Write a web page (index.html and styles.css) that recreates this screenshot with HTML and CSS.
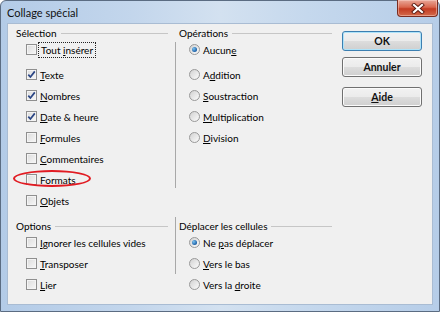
FILE: index.html
```html
<!DOCTYPE html>
<html>
<head>
  <title>Collage spécial</title>
  <link rel="stylesheet" href="styles.css">
</head>
<body>
  <div class="window">
    <div class="titlebar">
      <span class="title">Collage spécial</span>
      <div class="close">
        <svg width="14" height="11" viewBox="0 0 14 11">
          <path d="M3 2 L11 9 M11 2 L3 9" stroke="#5a1a10" stroke-width="4" stroke-linecap="square"/>
          <path d="M3 2 L11 9 M11 2 L3 9" stroke="#ffffff" stroke-width="2.2" stroke-linecap="square"/>
        </svg>
      </div>
    </div>

    <div class="client">
      <div class="groups">

        <!-- Sélection -->
        <div class="group">
          <div class="group-head"><span>Sélection</span></div>
          <div class="item first"><span class="box"></span><span class="focus">Tout <u>i</u>nsérer</span></div>
          <div class="item"><span class="box"><svg width="9" height="9" viewBox="0 0 9 9"><path d="M1.3 4.6 L3.4 7 L7.8 1.4" fill="none" stroke="#2a4584" stroke-width="1.7"/></svg></span><span><u>T</u>exte</span></div>
          <div class="item"><span class="box"><svg width="9" height="9" viewBox="0 0 9 9"><path d="M1.3 4.6 L3.4 7 L7.8 1.4" fill="none" stroke="#2a4584" stroke-width="1.7"/></svg></span><span><u>N</u>ombres</span></div>
          <div class="item"><span class="box"><svg width="9" height="9" viewBox="0 0 9 9"><path d="M1.3 4.6 L3.4 7 L7.8 1.4" fill="none" stroke="#2a4584" stroke-width="1.7"/></svg></span><span><u>D</u>ate &amp; heure</span></div>
          <div class="item"><span class="box"></span><span><u>F</u>ormules</span></div>
          <div class="item"><span class="box"></span><span><u>C</u>ommentaires</span></div>
          <div class="item marked"><span class="box"></span><span>For<u>m</u>ats</span><span class="ring"></span></div>
          <div class="item"><span class="box"></span><span><u>O</u>bjets</span></div>
        </div>

        <div class="vsep top"></div>

        <!-- Opérations -->
        <div class="group">
          <div class="group-head"><span>Opérations</span></div>
          <div class="item first"><span class="radio on"></span><span>Aucun<u>e</u></span></div>
          <div class="item"><span class="radio"></span><span>A<u>d</u>dition</span></div>
          <div class="item"><span class="radio"></span><span><u>S</u>oustraction</span></div>
          <div class="item"><span class="radio"></span><span><u>M</u>ultiplication</span></div>
          <div class="item"><span class="radio"></span><span><u>D</u>ivision</span></div>
        </div>

        <!-- Options -->
        <div class="group">
          <div class="group-head"><span>Options</span></div>
          <div class="item"><span class="box"></span><span><u>I</u>gnorer les cellules vides</span></div>
          <div class="item"><span class="box"></span><span><u>T</u>ransposer</span></div>
          <div class="item"><span class="box"></span><span><u>L</u>ier</span></div>
        </div>

        <div class="vsep bottom"></div>

        <!-- Déplacer les cellules -->
        <div class="group">
          <div class="group-head"><span>Déplacer les cellules</span></div>
          <div class="item"><span class="radio on"></span><span>Ne <u>p</u>as déplacer</span></div>
          <div class="item"><span class="radio"></span><span><u>V</u>ers le bas</span></div>
          <div class="item"><span class="radio"></span><span>Vers la <u>d</u>roite</span></div>
        </div>

      </div>

      <div class="buttons">
        <button class="btn default">OK</button>
        <button class="btn">Annuler</button>
        <button class="btn help"><u>A</u>ide</button>
      </div>
    </div>
  </div>
</body>
</html>
```

FILE: styles.css
```css
body {
  margin: 0;
  font-family: Lato, "Liberation Sans", sans-serif;
  font-size: 10px;
  color: #000;
}

.window {
  box-sizing: border-box;
  width: 440px;
  height: 312px;
  display: flex;
  flex-direction: column;
  border: 1px solid #5b6c82;
  border-radius: 6px 6px 0 0;
  background: linear-gradient(to right, #b3cbe7, #c3d6ec 30%, #d3e1f0 50%, #c5d8ed 70%, #b6cde8);
}

.titlebar {
  height: 22px;
  display: flex;
  align-items: flex-start;
  justify-content: space-between;
}

.title {
  margin: 5px 0 0 6px;
  font-size: 11px;
  color: #111;
}

.close {
  width: 41px;
  height: 17px;
  margin: -1px 1px 0 0;
  display: flex;
  align-items: center;
  justify-content: center;
  box-sizing: border-box;
  border: 1px solid #7a2c20;
  border-top: none;
  border-radius: 0 0 4px 4px;
  background: linear-gradient(#e9a899, #d9664d 45%, #c33b22 55%, #d36a4b);
  box-shadow: inset 0 0 0 1px rgba(255, 220, 210, 0.45);
}

.client {
  flex: 1;
  margin: 0 6px 6px;
  display: flex;
  border: 1px solid #a9bcd3;
  background: #f0f0f0;
  padding: 4px 10px 0 8px;
}

.groups {
  display: grid;
  grid-template-columns: 152px 11px 153px;
  grid-template-rows: auto auto;
  row-gap: 1px;
  align-items: start;
}

.group-head {
  height: 11px;
  line-height: 11px;
  display: flex;
  align-items: center;
  gap: 4px;
}

.group-head::after {
  content: "";
  flex: 1;
  border-top: 1px solid #c6c6c6;
}

.item {
  position: relative;
  height: 21px;
  display: flex;
  align-items: center;
  padding-left: 10px;
  gap: 3px;
}

.item.first {
  margin-bottom: 4px;
}

.box {
  width: 11px;
  height: 11px;
  box-sizing: border-box;
  border: 1px solid #8f8f8f;
  background: linear-gradient(135deg, #dcdcdc, #f7f7f7);
  box-shadow: inset 0 0 0 1px #f4f4f4;
  display: flex;
  align-items: center;
  justify-content: center;
}

.radio {
  position: relative;
  width: 11px;
  height: 11px;
  box-sizing: border-box;
  border: 1px solid #999;
  border-radius: 50%;
  background: linear-gradient(135deg, #d2d2d2, #fbfbfb);
}

.radio.on::after {
  content: "";
  position: absolute;
  left: 2px;
  top: 2px;
  width: 5px;
  height: 5px;
  border-radius: 50%;
  background: radial-gradient(circle at 35% 35%, #7cc3f0, #1b5fa6 70%);
}

.focus {
  outline: 1px dotted #222;
  outline-offset: 1px;
  padding: 0 1px;
}

u {
  text-underline-offset: 1px;
}

/* red annotation around Formats */
.ring {
  position: absolute;
  left: -3px;
  top: 1px;
  width: 78px;
  height: 17px;
  box-sizing: border-box;
  border: 2px solid #e11b22;
  border-radius: 50%;
}

.vsep {
  width: 1px;
  margin-left: 7px;
  background: #a8a8a8;
}

.vsep.top {
  margin-top: 14px;
  height: 146px;
}

.vsep.bottom {
  margin-top: -4px;
  height: 57px;
}

.buttons {
  margin-left: 10px;
  width: 80px;
  display: flex;
  flex-direction: column;
  padding-top: 3px;
}

.btn {
  height: 20px;
  margin-bottom: 6px;
  font-family: inherit;
  font-size: 10.5px;
  font-weight: bold;
  color: #111;
  border: 1px solid #707070;
  border-radius: 3px;
  background: linear-gradient(#f2f2f2, #ebebeb 50%, #dddddd 51%, #cfcfcf);
  box-shadow: inset 0 0 0 1px #fbfbfb;
  padding: 0;
}

.btn.default {
  border-color: #3c7fb1;
  box-shadow: inset 0 0 0 1px #aee3f9;
}

.btn.help {
  margin-top: 4px;
}
```
